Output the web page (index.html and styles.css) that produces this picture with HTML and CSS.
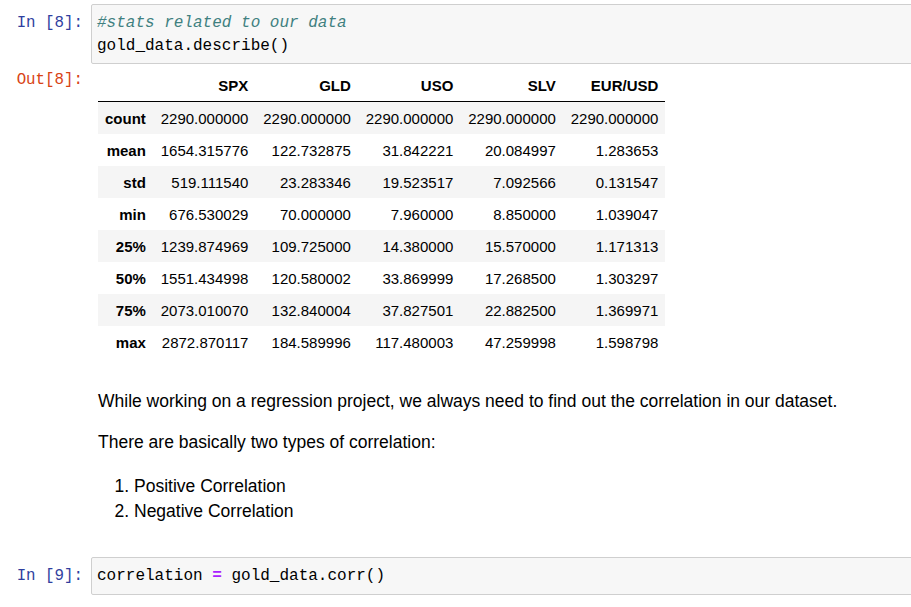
FILE: index.html
```html
<!DOCTYPE html>
<html>
<head>
<meta charset="utf-8">
<link rel="stylesheet" href="styles.css">
</head>
<body>
<div class="notebook">
  <div class="cell code-cell first">
    <div class="prompt in">In&nbsp;[8]:</div>
    <div class="input"><span class="cm">#stats related to our data</span>
gold_data.describe()</div>
  </div>
  <div class="cell out-cell">
    <div class="prompt out">Out[8]:</div>
    <div class="output">
      <table class="df">
        <thead>
          <tr><th></th><th>SPX</th><th>GLD</th><th>USO</th><th>SLV</th><th>EUR/USD</th></tr>
        </thead>
        <tbody>
          <tr><th>count</th><td>2290.000000</td><td>2290.000000</td><td>2290.000000</td><td>2290.000000</td><td>2290.000000</td></tr>
          <tr><th>mean</th><td>1654.315776</td><td>122.732875</td><td>31.842221</td><td>20.084997</td><td>1.283653</td></tr>
          <tr><th>std</th><td>519.111540</td><td>23.283346</td><td>19.523517</td><td>7.092566</td><td>0.131547</td></tr>
          <tr><th>min</th><td>676.530029</td><td>70.000000</td><td>7.960000</td><td>8.850000</td><td>1.039047</td></tr>
          <tr><th>25%</th><td>1239.874969</td><td>109.725000</td><td>14.380000</td><td>15.570000</td><td>1.171313</td></tr>
          <tr><th>50%</th><td>1551.434998</td><td>120.580002</td><td>33.869999</td><td>17.268500</td><td>1.303297</td></tr>
          <tr><th>75%</th><td>2073.010070</td><td>132.840004</td><td>37.827501</td><td>22.882500</td><td>1.369971</td></tr>
          <tr><th>max</th><td>2872.870117</td><td>184.589996</td><td>117.480003</td><td>47.259998</td><td>1.598798</td></tr>
        </tbody>
      </table>
    </div>
  </div>
  <div class="cell md-cell">
    <div class="md">
      <p>While working on a regression project, we always need to find out the correlation in our dataset.</p>
      <p>There are basically two types of correlation:</p>
      <ol>
        <li>Positive Correlation</li>
        <li>Negative Correlation</li>
      </ol>
    </div>
  </div>
  <div class="cell code-cell second">
    <div class="prompt in">In&nbsp;[9]:</div>
    <div class="input">correlation <span class="op">=</span> gold_data.corr()</div>
  </div>
</div>
</body>
</html>
```

FILE: styles.css
```css
html, body {
  margin: 0;
  padding: 0;
  background: #ffffff;
  overflow: hidden;
}
.notebook {
  width: 930px;
}
.cell {
  display: flex;
  align-items: flex-start;
}
.prompt {
  width: 91px;
  flex: none;
  box-sizing: border-box;
  padding-right: 8px;
  text-align: right;
  font-family: "Liberation Mono", "DejaVu Sans Mono", monospace;
  font-size: 15.8px;
  line-height: 23px;
}
.prompt.in { color: #303f9f; }
.prompt.out { color: #d84315; padding-top: 5px; }
.input {
  flex: 1;
  background: #f7f7f7;
  border: 1px solid #cfcfcf;
  border-radius: 2px;
  padding: 7px 5px 5px 5px;
  white-space: pre;
  font-family: "Liberation Mono", "DejaVu Sans Mono", monospace;
  font-size: 16px;
  line-height: 23px;
  color: #000;
}
.code-cell.first { padding-top: 4px; }
.code-cell.first .prompt.in { padding-top: 8px; }
.code-cell.second { margin-top: 33px; }
.code-cell.second .input { padding: 7px 5px 6px 5px; }
.code-cell.second .prompt.in { padding-top: 8px; }
.cm { color: #408080; font-style: italic; }
.op { color: #aa22ff; font-weight: bold; }
.output {
  padding-left: 7px;
  padding-top: 6px;
}
.df {
  border-collapse: collapse;
  font-family: "Liberation Sans", Arial, sans-serif;
  font-size: 15px;
  color: #000;
}
.df th, .df td {
  text-align: right;
  padding: 0 7px;
  height: 32px;
  white-space: nowrap;
}
.df td { min-width: 88.5px; }
.df thead th {
  font-weight: bold;
  height: 29px;
  padding-top: 1px;
  padding-bottom: 1px;
  border-bottom: 1px solid #000;
}
.df tbody th { font-weight: bold; }
.df tbody tr:nth-child(odd) { background: #f5f5f5; }
.md-cell {
  padding-left: 98px;
  padding-top: 31px;
}
.md {
  font-family: "Liberation Sans", Arial, sans-serif;
  font-size: 17.5px;
  color: #000;
  line-height: 25px;
}
.md p { margin: 0 0 16px 0; }
.md p + p { margin-bottom: 19px; }
.md ol { margin: 0; padding-left: 36px; }
.md li { line-height: 25px; }
```
